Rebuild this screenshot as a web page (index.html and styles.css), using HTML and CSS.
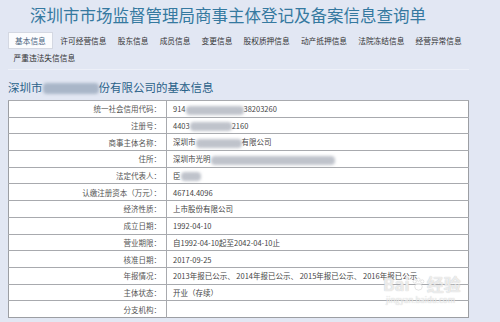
FILE: index.html
```html
<!DOCTYPE html>
<html lang="zh-CN">
<head>
  <meta charset="UTF-8">
  <title>商事主体登记及备案信息查询单</title>
  <link rel="stylesheet" href="styles.css">
</head>
<body>
  <div class="page">
    <h1>深圳市市场监督管理局商事主体登记及备案信息查询单</h1>

    <ul class="tabs">
      <li class="tab active">基本信息</li>
      <li class="tab">许可经营信息</li>
      <li class="tab">股东信息</li>
      <li class="tab">成员信息</li>
      <li class="tab">变更信息</li>
      <li class="tab">股权质押信息</li>
      <li class="tab">动产抵押信息</li>
      <li class="tab">法院冻结信息</li>
      <li class="tab">经营异常信息</li>
      <li class="tab">严重违法失信信息</li>
    </ul>

    <h2>深圳市<span class="blur blur-title"></span>份有限公司的基本信息</h2>

    <table class="info">
      <tr><th>统一社会信用代码：</th><td>914<span class="blur" style="width:58px"></span>38203260</td></tr>
      <tr><th>注册号：</th><td>4403<span class="blur" style="width:42px"></span>2160</td></tr>
      <tr><th>商事主体名称：</th><td>深圳市<span class="blur" style="width:46px"></span>有限公司</td></tr>
      <tr><th>住所：</th><td>深圳市光明<span class="blur" style="width:124px"></span></td></tr>
      <tr><th>法定代表人：</th><td>臣<span class="blur" style="width:20px"></span></td></tr>
      <tr><th>认缴注册资本（万元）：</th><td>46714.4096</td></tr>
      <tr><th>经济性质：</th><td>上市股份有限公司</td></tr>
      <tr><th>成立日期：</th><td>1992-04-10</td></tr>
      <tr><th>营业期限：</th><td>自1992-04-10起至2042-04-10止</td></tr>
      <tr><th>核准日期：</th><td>2017-09-25</td></tr>
      <tr><th>年报情况：</th><td>2013年报已公示、 2014年报已公示、 2015年报已公示、 2016年报已公示</td></tr>
      <tr><th>主体状态：</th><td>开业（存续）</td></tr>
      <tr><th>分支机构：</th><td></td></tr>
    </table>
  </div>

  <div class="watermark">
    <div class="wm-logo">Bai<svg class="paw" viewBox="0 0 20 20" width="15" height="15"><circle cx="5" cy="6" r="2.2"/><circle cx="10" cy="3.5" r="2.2"/><circle cx="15" cy="6" r="2.2"/><ellipse cx="10" cy="13" rx="5" ry="4.5"/></svg>经验</div>
    <div class="wm-url">jingyan.baidu.com</div>
  </div>
</body>
</html>
```

FILE: styles.css
```css
body {
  margin: 0;
  background: #e2e7f3;
  font-family: "Noto Sans CJK SC", "Liberation Sans", sans-serif;
  width: 500px;
  height: 322px;
  overflow: hidden;
  position: relative;
}
.page {
  padding: 0 31px 0 8px;
}
h1 {
  margin: 0;
  padding-left: 22px;
  font-size: 16.5px;
  font-weight: normal;
  line-height: 31px;
  color: #3579a0;
  white-space: nowrap;
}
.tabs {
  list-style: none;
  margin: 1px 0 0;
  padding: 0 0 3px;
  display: flex;
  flex-wrap: wrap;
  border-bottom: 1px solid #edf0f8;
}
.tab {
  font-size: 7.7px;
  line-height: 15px;
  padding: 0 4.6px;
  color: #333;
  white-space: nowrap;
  border: 1px solid transparent;
}
.tab.active {
  background: #fbfcfe;
  border-color: #d4d8e2;
  color: #4a6480;
  padding: 0 6px;
  margin-right: 2px;
}
h2 {
  margin: 9px 0 0;
  font-size: 11.5px;
  font-weight: normal;
  line-height: 16px;
  color: #2a6289;
  white-space: nowrap;
}
.blur {
  display: inline-block;
  height: 9px;
  background: #bfc3cb;
  border-radius: 4px;
  filter: blur(1.6px);
  vertical-align: middle;
}
.blur-title {
  width: 56px;
  height: 11px;
  background: #a9b6c8;
}
.info {
  margin-top: 5px;
  width: 461px;
  border-collapse: collapse;
  background: #fff;
  border: 1px solid #9c9ea3;
  font-size: 7.5px;
}
.info tr {
  height: 16.7px;
}
.info th, .info td {
  border-top: 1px solid #a8aaae;
  padding: 0;
  white-space: nowrap;
}
.info th {
  width: 152px;
  text-align: right;
  padding-right: 5px;
  font-weight: normal;
  color: #555;
  border-right: 1px solid #a8aaae;
}
.info td {
  padding-left: 6px;
  color: #444;
}
.watermark {
  position: absolute;
  left: 383px;
  top: 274px;
  color: rgba(255, 255, 255, 0.7);
  text-shadow: 0 0 1px #bbb;
}
.wm-logo {
  font-size: 17px;
  line-height: 20px;
  font-weight: bold;
  display: flex;
  align-items: center;
}
.paw {
  fill: rgba(255, 255, 255, 0.7);
  stroke: #c4c4c4;
  stroke-width: 0.6;
  margin: 0 1px;
}
.wm-url {
  font-size: 8px;
  line-height: 12px;
  padding-left: 3px;
}
```
